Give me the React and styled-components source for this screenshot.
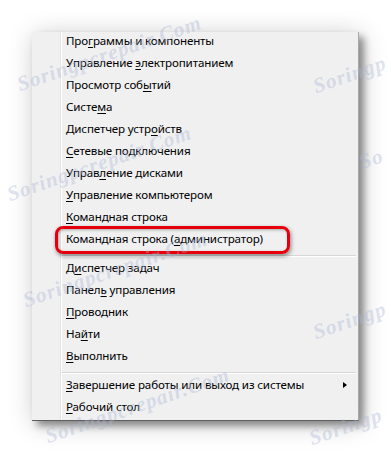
import styled, { createGlobalStyle } from "styled-components";

const GlobalStyle = createGlobalStyle`
  html, body {
    margin: 0;
    padding: 0;
    background: #ffffff;
  }
  body {
    font-family: "Noto Sans", "Open Sans", sans-serif;
  }
`;

const Page = styled.div`
  position: relative;
  width: 391px;
  height: 454px;
  overflow: hidden;
  padding: 32px 0 0 32px;
  box-sizing: border-box;
`;

const Menu = styled.ul`
  position: relative;
  width: 327px;
  margin: 0;
  padding: 0;
  list-style: none;
  box-sizing: border-box;
  border-right: 1px solid #a8a8a8;
  border-bottom: 1px solid #5e5e5e;
  background: linear-gradient(
    to right,
    #f0f0f0 0,
    #f0f0f0 28px,
    #e2e3e3 28px,
    #e2e3e3 29px,
    #ffffff 29px,
    #ffffff 30px,
    #f0f0f0 30px
  );
  box-shadow: 5px 5px 7px rgba(0, 0, 0, 0.38), 2px 3px 24px rgba(0, 0, 0, 0.22);
`;

const Item = styled.li`
  position: relative;
  display: flex;
  align-items: center;
  height: 22px;
  padding: 0 22px 4px 34px;
  box-sizing: border-box;
  font-size: 11.6px;
  letter-spacing: -0.15px;
  line-height: 16px;
  color: #000000;
  white-space: nowrap;

  ${(p) =>
    p.$marked &&
    `
    &::after {
      content: "";
      position: absolute;
      left: 23px;
      top: -4px;
      width: 235px;
      height: 28px;
      box-sizing: border-box;
      border: 3px solid #e5000b;
      border-radius: 8px;
      box-shadow: 1px 2px 4px rgba(0, 0, 0, 0.45), inset 1px 1px 3px rgba(0, 0, 0, 0.3);
    }
  `}
`;

const Key = styled.span`
  text-decoration: underline;
  text-underline-offset: 2px;
`;

const Arrow = styled.span`
  margin-left: auto;
  margin-right: -11px;
  width: 0;
  height: 0;
  border-top: 3.5px solid transparent;
  border-bottom: 3.5px solid transparent;
  border-left: 4px solid #000000;
`;

const Separator = styled.li`
  height: 7px;
  margin-left: 30px;
  margin-right: 2px;
  display: flex;
  align-items: center;

  &::before {
    content: "";
    flex: 1;
    height: 1px;
    background: #d7d7d7;
    box-shadow: 0 1px 0 #ffffff;
  }
`;

const Watermark = styled.div`
  position: absolute;
  left: ${(p) => p.$x}px;
  top: ${(p) => p.$y}px;
  font-family: "Liberation Serif", serif;
  font-style: italic;
  font-weight: bold;
  font-size: 21px;
  letter-spacing: 1px;
  color: rgba(170, 182, 214, 0.4);
  transform: rotate(-19deg);
  transform-origin: left bottom;
  white-space: nowrap;
  pointer-events: none;
`;

const groups = [
  [
    ["Про", "г", "раммы и компоненты"],
    ["Управление ", "э", "лектропитанием"],
    ["Просмотр соб", "ы", "тий"],
    ["Систе", "м", "а"],
    ["Диспетчер устр", "о", "йств"],
    ["", "С", "етевые подключения"],
    ["Управ", "л", "ение дисками"],
    ["", "У", "правление компьютером"],
    ["", "К", "омандная строка"],
    ["Командная строка (", "а", "дминистратор)", true],
  ],
  [
    ["Д", "и", "спетчер задач"],
    ["Панел", "ь", " управления"],
    ["", "П", "роводник"],
    ["На", "й", "ти"],
    ["", "В", "ыполнить"],
  ],
  [
    ["", "З", "авершение работы или выход из системы", false, true],
    ["", "Р", "абочий стол"],
  ],
];

const marks = [
  [22, 72, "Soringpcrepair.Com"],
  [318, 74, "Soringp"],
  [12, 182, "Soringpcrepair.Com"],
  [364, 150, "So"],
  [28, 288, "Soringpcrepair.Com"],
  [318, 320, "Soringp"],
  [50, 424, "Soringpcrepair.Com"],
  [314, 426, "Soringp"],
];

export default function App() {
  return (
    <>
      <GlobalStyle />
      <Page>
        <Menu>
          {groups.map((group, gi) => [
            gi > 0 && <Separator key={`s${gi}`} />,
            ...group.map(([a, k, b, marked, sub]) => (
              <Item key={a + k + b} $marked={marked}>
                <span>
                  {a}
                  <Key>{k}</Key>
                  {b}
                </span>
                {sub && <Arrow />}
              </Item>
            )),
          ])}
        </Menu>
        {marks.map(([x, y, text], i) => (
          <Watermark key={i} $x={x} $y={y}>
            {text}
          </Watermark>
        ))}
      </Page>
    </>
  );
}
